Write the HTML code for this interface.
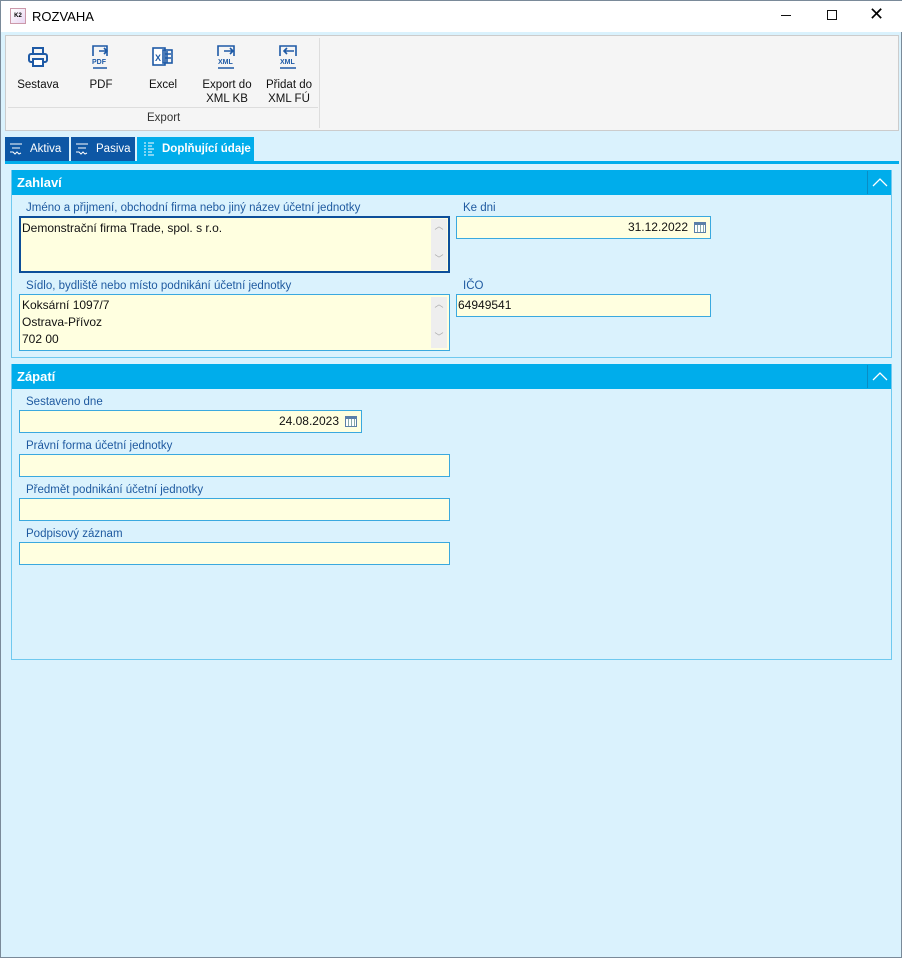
<!DOCTYPE html><html><head><meta charset="utf-8"><style>
*{box-sizing:border-box;margin:0;padding:0}
body{width:902px;height:958px;background:#daf2fd;font-family:"Liberation Sans",sans-serif;font-size:12px;position:relative;overflow:hidden;border:1px solid #7a8a99}
.a{position:absolute}
.lbl{position:absolute;color:#1f5aa0;font-size:11.5px}
.inp{position:absolute;background:#ffffe0;border:1px solid #3aa9df;font-size:12px;color:#111}
.hdr{position:absolute;background:#00adeb;color:#fff;font-weight:bold;font-size:13px;padding:5px 5px}
.tb{position:absolute;text-align:center;font-size:11.5px;color:#111;line-height:14px;white-space:nowrap}
.tab{position:absolute;top:136px;height:25px;color:#fff;font-size:11.5px;padding:6px 0 0 25px;white-space:nowrap}
</style></head><body>
<div class="a" style="left:0;top:0;width:902px;height:31px;background:#fff"></div>
<div class="a" style="left:9px;top:7px;width:16px;height:16px;background:linear-gradient(135deg,#fff,#e9d6f2);border:1px solid #c9a;font-size:6px;font-weight:bold;line-height:14px;text-align:center">K2</div>
<div class="a" style="left:31px;top:8px;font-size:13px">ROZVAHA</div>
<div class="a" style="left:780px;top:14px;width:10px;height:1px;background:#111"></div>
<div class="a" style="left:826px;top:9px;width:10px;height:10px;border:1px solid #111"></div>
<div class="a" style="left:868px;top:3px;font-size:18px">✕</div>
<div class="a" style="left:4px;top:34px;width:894px;height:96px;background:#f5f5f5;border:1px solid #ccc"></div>
<div class="a" style="left:318px;top:37px;width:1px;height:90px;background:#ddd"></div>
<div class="a" style="left:7px;top:106px;width:310px;height:1px;background:#ddd"></div>
<div class="tb" style="left:146px;top:110px;width:32px;color:#333">Export</div>
<svg class="a" style="left:26px;top:45px" width="22" height="22" viewBox="0 0 22 22" fill="none" stroke="#1e5aa6" stroke-width="2"><rect x="6" y="2" width="10" height="6"/><rect x="2" y="8" width="18" height="8" rx="2"/><rect x="6" y="13" width="10" height="7" fill="#fff"/></svg>
<div class="tb" style="left:12px;top:77px;width:50px">Sestava</div>
<svg class="a" style="left:89px;top:43px" width="22" height="26" viewBox="0 0 22 26" fill="none" stroke="#1e5aa6" stroke-width="1.6"><path d="M3 12V2h14v10M3 24h14"/><path d="M9 7h8M14 4l3 3-3 3"/><text x="2" y="20" font-size="7" font-weight="bold" fill="#1e5aa6" stroke="none" font-family="Liberation Sans">PDF</text></svg>
<div class="tb" style="left:80px;top:77px;width:40px">PDF</div>
<svg class="a" style="left:150px;top:44px" width="24" height="24" viewBox="0 0 24 24" fill="none" stroke="#1e5aa6" stroke-width="1.6"><rect x="2" y="3" width="12" height="17" fill="#fff"/><rect x="12" y="5" width="9" height="13"/><path d="M14 9h6M14 13h6M16 6v12"/><text x="4" y="16" font-size="9" font-weight="bold" fill="#1e5aa6" stroke="none" font-family="Liberation Sans">X</text></svg>
<div class="tb" style="left:142px;top:77px;width:40px">Excel</div>
<svg class="a" style="left:214px;top:43px" width="24" height="26" viewBox="0 0 24 26" fill="none" stroke="#1e5aa6" stroke-width="1.6"><path d="M3 12V2h16v10M3 24h16"/><path d="M9 7h9M15 4l3 3-3 3"/><text x="3" y="20" font-size="7" font-weight="bold" fill="#1e5aa6" stroke="none" font-family="Liberation Sans">XML</text></svg>
<div class="tb" style="left:196px;top:77px;width:60px">Export do<br>XML KB</div>
<svg class="a" style="left:276px;top:43px" width="24" height="26" viewBox="0 0 24 26" fill="none" stroke="#1e5aa6" stroke-width="1.6"><path d="M3 12V2h16v10M3 24h16"/><path d="M7 7h10M10 4L7 7l3 3"/><text x="3" y="20" font-size="7" font-weight="bold" fill="#1e5aa6" stroke="none" font-family="Liberation Sans">XML</text></svg>
<div class="tb" style="left:258px;top:77px;width:60px">Přidat do<br>XML FÚ</div>
<div class="tab" style="left:4px;width:64px;background:#0d57a5">Aktiva</div>
<div class="tab" style="left:70px;width:64px;background:#0d57a5">Pasiva</div>
<div class="tab" style="left:136px;width:117px;background:#00adeb;font-weight:bold">Doplňující údaje</div>
<svg class="a" style="left:8px;top:141px" width="14" height="14" stroke="#fff" fill="none"><path d="M1 2h12M3 6h8M1 10h3l2 2 2-2 2 2 2-1"/></svg>
<svg class="a" style="left:74px;top:141px" width="14" height="14" stroke="#fff" fill="none"><path d="M1 2h12M3 6h8M1 10h3l2 2 2-2 2 2 2-1"/></svg>
<svg class="a" style="left:141px;top:141px" width="14" height="14" stroke="#fff" fill="none"><path d="M2 1h2M2 4h2M2 7h2M2 10h2M2 13h2M6 1h6M6 4h4M6 7h6M6 10h4M6 13h6"/></svg>
<div class="a" style="left:4px;top:160px;width:894px;height:3px;background:#00adeb"></div>
<div class="a" style="left:10px;top:169px;width:881px;height:188px;border:1px solid #6fc9ef"></div>
<div class="hdr" style="left:11px;top:169px;width:879px;height:25px">Zahlaví</div>
<div class="a" style="left:866px;top:170px;width:1px;height:23px;background:#0a8cc4"></div>
<svg class="a" style="left:870px;top:175px" width="18" height="12" stroke="#fff" fill="none" stroke-width="1.3"><path d="M2 10l7-7 7 7"/></svg>
<div class="lbl" style="left:25px;top:201px">Jméno a přijmení, obchodní firma nebo jiný název účetní jednotky</div>
<div class="inp" style="left:18px;top:215px;width:431px;height:57px;border:2px solid #0d4f99;padding:3px 1px">Demonstrační firma Trade, spol. s r.o.</div>
<div class="a" style="left:430px;top:218px;width:16px;height:51px;background:#eee;color:#aaa;font-size:9px;text-align:center">︿<br><br><br>﹀</div>
<div class="lbl" style="left:462px;top:201px">Ke dni</div>
<div class="inp" style="left:455px;top:215px;width:255px;height:23px;text-align:right;padding:3px 22px 0 0">31.12.2022</div>
<div class="a" style="left:693px;top:221px;width:12px;height:11px;border:1px solid #5b7fa8;border-top:3px solid #5b7fa8;background:repeating-linear-gradient(90deg,#fff 0 2px,#8aa 2px 3px)"></div>
<div class="lbl" style="left:25px;top:279px">Sídlo, bydliště nebo místo podnikání účetní jednotky</div>
<div class="inp" style="left:18px;top:293px;width:431px;height:57px;padding:2px 2px;line-height:17px">Koksární 1097/7<br>Ostrava-Přívoz<br>702 00</div>
<div class="a" style="left:430px;top:296px;width:16px;height:51px;background:#eee;color:#aaa;font-size:9px;text-align:center">︿<br><br><br>﹀</div>
<div class="lbl" style="left:462px;top:279px">IČO</div>
<div class="inp" style="left:455px;top:293px;width:255px;height:23px;padding:3px 1px">64949541</div>
<div class="a" style="left:10px;top:363px;width:881px;height:296px;border:1px solid #6fc9ef"></div>
<div class="hdr" style="left:11px;top:363px;width:879px;height:25px">Zápatí</div>
<div class="a" style="left:866px;top:364px;width:1px;height:23px;background:#0a8cc4"></div>
<svg class="a" style="left:870px;top:369px" width="18" height="12" stroke="#fff" fill="none" stroke-width="1.3"><path d="M2 10l7-7 7 7"/></svg>
<div class="lbl" style="left:25px;top:395px">Sestaveno dne</div>
<div class="inp" style="left:18px;top:409px;width:343px;height:23px;text-align:right;padding:3px 22px 0 0">24.08.2023</div>
<div class="a" style="left:344px;top:415px;width:12px;height:11px;border:1px solid #5b7fa8;border-top:3px solid #5b7fa8;background:repeating-linear-gradient(90deg,#fff 0 2px,#8aa 2px 3px)"></div>
<div class="lbl" style="left:25px;top:439px">Právní forma účetní jednotky</div>
<div class="inp" style="left:18px;top:453px;width:431px;height:23px"></div>
<div class="lbl" style="left:25px;top:483px">Předmět podnikání účetní jednotky</div>
<div class="inp" style="left:18px;top:497px;width:431px;height:23px"></div>
<div class="lbl" style="left:25px;top:527px">Podpisový záznam</div>
<div class="inp" style="left:18px;top:541px;width:431px;height:23px"></div>
</body></html>
